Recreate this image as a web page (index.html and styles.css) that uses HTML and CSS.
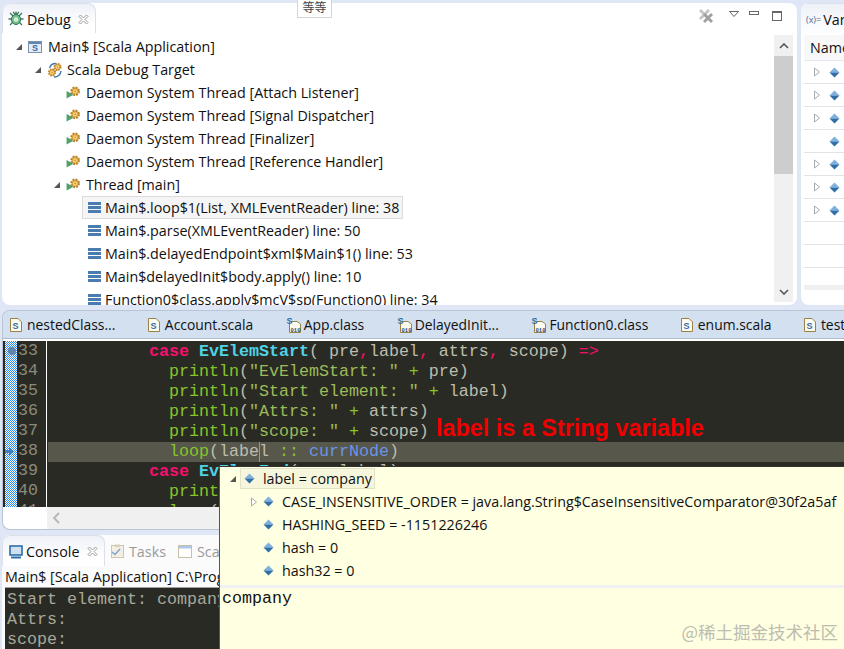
FILE: index.html
```html
<!DOCTYPE html>
<html lang="en">

<head>
    <meta charset="UTF-8">
    <title>Scala Debug</title>
    <link rel="stylesheet" href="styles.css">
</head>

<body>
    <svg class="defs" width="0" height="0">
        <defs>
            <pattern id="checker" width="2" height="2" patternUnits="userSpaceOnUse">
                <rect width="2" height="2" fill="#fff"/>
                <rect width="1" height="1" fill="#2f8cf0"/>
                <rect x="1" y="1" width="1" height="1" fill="#2f8cf0"/>
            </pattern>
        </defs>
        <symbol id="gear" viewBox="0 0 12 12">
            <circle cx="6" cy="6" r="4.2" fill="#e9b24a" stroke="#b9822a" stroke-width="2.4" stroke-dasharray="2 1.3"/>
            <circle cx="6" cy="6" r="2.2" fill="#f6d98a"/>
            <circle cx="6" cy="6" r="1" fill="#c98a2a"/>
        </symbol>
        <symbol id="thread" viewBox="0 0 16 14">
            <path d="M0.5 5.5 L8 9.5 L0.5 13.5 Z" fill="#4fa06a"/>
            <use href="#gear" x="4" y="0" width="11.5" height="11.5"/>
        </symbol>
        <symbol id="target" viewBox="0 0 16 16">
            <path d="M2.5 6 A6.5 6.5 0 0 1 9 1.5 M14 9 A6.5 6.5 0 0 1 7 15" fill="none" stroke="#3f78b0" stroke-width="1.4"/>
            <use href="#gear" x="6" y="0.5" width="9" height="9"/>
            <use href="#gear" x="0.5" y="6" width="9" height="9"/>
        </symbol>
        <symbol id="app" viewBox="0 0 14 12">
            <rect x="0.5" y="0.5" width="13" height="11" fill="#e4ecf6" stroke="#7d93ad"/>
            <rect x="1" y="1" width="12" height="2" fill="#5f86b5"/>
            <text x="7" y="10" class="icon-s">S</text>
        </symbol>
        <symbol id="frame" viewBox="0 0 13 11">
            <rect width="13" height="3" fill="#4a7cb0"/>
            <rect y="4" width="13" height="3" fill="#4a7cb0"/>
            <rect y="8" width="13" height="3" fill="#4a7cb0"/>
        </symbol>
        <symbol id="diamond" viewBox="0 0 11 11">
            <path d="M5.5 0.5 L10.5 5.5 H0.5 Z" fill="#7fb0de"/>
            <path d="M0.5 5.5 H10.5 L5.5 10.5 Z" fill="#2f6ea8"/>
        </symbol>
        <symbol id="scalafile" viewBox="0 0 12 14">
            <path d="M0.5 0.5 H8 L11.5 4 V13.5 H0.5 Z" fill="#fdfaf0" stroke="#9a8148"/>
            <text x="5.6" y="11" class="icon-s">S</text>
        </symbol>
        <symbol id="classfile" viewBox="0 0 17 16">
            <path d="M3.5 4.5 H11 L14.5 7 V15.5 H3.5 Z" fill="#fdfaf0" stroke="#9a8148"/>
            <text x="3.5" y="7" class="icon-s">S</text>
            <text x="9.5" y="14.5" class="icon-bin">010</text>
        </symbol>
        <symbol id="close" viewBox="0 0 11 11">
            <path d="M1 2.5 L2.5 1 L5.5 4 L8.5 1 L10 2.5 L7 5.5 L10 8.5 L8.5 10 L5.5 7 L2.5 10 L1 8.5 L4 5.5 Z" fill="#fff" stroke="#9a9a9a"/>
        </symbol>
        <symbol id="open" viewBox="0 0 8 8">
            <path d="M7 1 V7 H1 Z" fill="#555"/>
        </symbol>
        <symbol id="closed" viewBox="0 0 8 10">
            <path d="M1.5 1 L6.5 5 L1.5 9 Z" fill="#fff" stroke="#aaa"/>
        </symbol>
    </svg>

    <div class="top-row">
        <section class="debug-panel">
            <div class="panel-head">
                <div class="view-tab">
                    <svg class="bug" viewBox="0 0 16 16">
                        <path d="M2 2 L14 14 M14 2 L2 14 M0.5 8 H15.5 M8 0.5 V3 M5 1 L8 4 L11 1" fill="none" stroke="#3d7a5c" stroke-width="1.3"/>
                        <ellipse cx="8" cy="8.5" rx="4.6" ry="5" fill="#74c08e" stroke="#2f6f50"/>
                        <circle cx="8" cy="8.5" r="2.2" fill="#d5efdc"/>
                    </svg>
                    <span>Debug</span>
                    <svg class="tab-close"><use href="#close"/></svg>
                </div>
                <div class="head-tools">
                    <svg class="remove-all" viewBox="0 0 16 16">
                        <path d="M1 3 L3 1 L12 10 L10 12 Z M10 1 L12 3 L3 12 L1 10 Z" fill="#c4c4c4"/>
                        <path d="M5 7 L7 5 L15 13 L13 15 Z M13 5 L15 7 L7 15 L5 13 Z" fill="#a0a0a0"/>
                    </svg>
                    <svg class="tool-menu" viewBox="0 0 10 6"><path d="M0.5 0.5 H9.5 L5 5.5 Z" fill="#fff" stroke="#666"/></svg>
                    <span class="tool-min"></span>
                    <span class="tool-max"></span>
                </div>
            </div>
            <div class="debug-body">
                <ul class="tree">
                    <li class="row lv0"><svg class="twist"><use href="#open"/></svg><svg class="ic-app"><use href="#app"/></svg>Main$ [Scala Application]</li>
                    <li class="row lv1"><svg class="twist"><use href="#open"/></svg><svg class="ic-target"><use href="#target"/></svg>Scala Debug Target</li>
                    <li class="row lv2"><svg class="ic-thread"><use href="#thread"/></svg>Daemon System Thread [Attach Listener]</li>
                    <li class="row lv2"><svg class="ic-thread"><use href="#thread"/></svg>Daemon System Thread [Signal Dispatcher]</li>
                    <li class="row lv2"><svg class="ic-thread"><use href="#thread"/></svg>Daemon System Thread [Finalizer]</li>
                    <li class="row lv2"><svg class="ic-thread"><use href="#thread"/></svg>Daemon System Thread [Reference Handler]</li>
                    <li class="row lv2 has-twist"><svg class="twist"><use href="#open"/></svg><svg class="ic-thread"><use href="#thread"/></svg>Thread [main]</li>
                    <li class="row lv3"><span class="selected"><svg class="ic-frame"><use href="#frame"/></svg>Main$.loop$1(List, XMLEventReader) line: 38</span></li>
                    <li class="row lv3"><span class="plain"><svg class="ic-frame"><use href="#frame"/></svg>Main$.parse(XMLEventReader) line: 50</span></li>
                    <li class="row lv3"><span class="plain"><svg class="ic-frame"><use href="#frame"/></svg>Main$.delayedEndpoint$xml$Main$1() line: 53</span></li>
                    <li class="row lv3"><span class="plain"><svg class="ic-frame"><use href="#frame"/></svg>Main$delayedInit$body.apply() line: 10</span></li>
                    <li class="row lv3"><span class="plain"><svg class="ic-frame"><use href="#frame"/></svg>Function0$class.apply$mcV$sp(Function0) line: 34</span></li>
                </ul>
                <div class="vscroll">
                    <svg viewBox="0 0 10 6"><path d="M1 5 L5 1 L9 5" fill="none" stroke="#555" stroke-width="1.6"/></svg>
                    <div class="vthumb"></div>
                    <svg viewBox="0 0 10 6"><path d="M1 1 L5 5 L9 1" fill="none" stroke="#555" stroke-width="1.6"/></svg>
                </div>
            </div>
        </section>

        <section class="var-panel">
            <div class="var-head"><span class="var-x">(x)=</span><span>Variables</span></div>
            <div class="var-name">Name</div>
            <div class="var-row"><svg class="ic-closed"><use href="#closed"/></svg><svg class="ic-diamond"><use href="#diamond"/></svg></div>
            <div class="var-row"><svg class="ic-closed"><use href="#closed"/></svg><svg class="ic-diamond"><use href="#diamond"/></svg></div>
            <div class="var-row"><svg class="ic-closed"><use href="#closed"/></svg><svg class="ic-diamond"><use href="#diamond"/></svg></div>
            <div class="var-row no-twist"><svg class="ic-diamond"><use href="#diamond"/></svg></div>
            <div class="var-row"><svg class="ic-closed"><use href="#closed"/></svg><svg class="ic-diamond"><use href="#diamond"/></svg></div>
            <div class="var-row"><svg class="ic-closed"><use href="#closed"/></svg><svg class="ic-diamond"><use href="#diamond"/></svg></div>
            <div class="var-row"><svg class="ic-closed"><use href="#closed"/></svg><svg class="ic-diamond"><use href="#diamond"/></svg></div>
            <div class="var-row"></div>
            <div class="var-row"></div>
            <div class="var-hscroll"></div>
        </section>
    </div>

    <section class="editor-panel">
        <div class="editor-tabs">
            <span class="file-tab"><svg class="ic-scala"><use href="#scalafile"/></svg>nestedClass...</span>
            <span class="file-tab"><svg class="ic-scala"><use href="#scalafile"/></svg>Account.scala</span>
            <span class="file-tab"><svg class="ic-class"><use href="#classfile"/></svg>App.class</span>
            <span class="file-tab"><svg class="ic-class"><use href="#classfile"/></svg>DelayedInit...</span>
            <span class="file-tab"><svg class="ic-class"><use href="#classfile"/></svg>Function0.class</span>
            <span class="file-tab"><svg class="ic-scala"><use href="#scalafile"/></svg>enum.scala</span>
            <span class="file-tab"><svg class="ic-scala"><use href="#scalafile"/></svg>test.scala</span>
        </div>
        <div class="code-area">
            <div class="marks">
                <svg class="checker" width="12" height="170"><rect width="12" height="170" fill="url(#checker)"/></svg>
                <span class="bp-dot"></span>
                <svg class="ip-arrow" viewBox="0 0 9 9"><path d="M0 3 H4 V0 L9 4.5 L4 9 V6 H0 Z" fill="#3f7fc0"/></svg>
            </div>
            <div class="nums">33
34
35
36
37
38
39
40
41</div>
            <pre class="code"><span class="ln">          <b class="kw">case</b> <b class="ty">EvElemStart</b>( pre<span class="kw">,</span>label<span class="kw">,</span> attrs<span class="kw">,</span> scope) <span class="kw">=&gt;</span></span>
<span class="ln">            <span class="fn">println</span>(<span class="str">"EvElemStart: "</span> <span class="fn">+</span> pre)</span>
<span class="ln">            <span class="fn">println</span>(<span class="str">"Start element: "</span> <span class="fn">+</span> label)</span>
<span class="ln">            <span class="fn">println</span>(<span class="str">"Attrs: "</span> <span class="fn">+</span> attrs)</span>
<span class="ln">            <span class="fn">println</span>(<span class="str">"scope: "</span> <span class="fn">+</span> scope)</span>
<span class="ln current">            <span class="fn">loop</span>(labe<span class="caret"></span>l <span class="fn">::</span> <span class="blue">currNode</span>)</span>
<span class="ln">          <b class="kw">case</b> <b class="ty">EvElemEnd</b>(pre,label) <span class="kw">=&gt;</span></span>
<span class="ln">            <span class="fn">println</span>(<span class="str">"EvElemEnd: "</span>)</span>
<span class="ln">            <span class="fn">loop</span>(currNode)</span></pre>
        </div>
        <div class="editor-hscroll">
            <svg viewBox="0 0 7 12"><path d="M6 1 L1 6 L6 11" fill="none" stroke="#b5b5b5" stroke-width="1.8"/></svg>
        </div>
    </section>

    <section class="console-panel">
        <div class="console-tabs">
            <div class="view-tab console-tab">
                <svg class="monitor" viewBox="0 0 14 14">
                    <rect x="1" y="1" width="12" height="9" fill="#cfe0f2" stroke="#2f6ea8" stroke-width="1.6"/>
                    <rect x="2" y="11.5" width="10" height="2" fill="#2f6ea8"/>
                </svg>
                <span>Console</span>
                <svg class="tab-close"><use href="#close"/></svg>
            </div>
            <span class="dim-tab">
                <svg class="ic-tasks" viewBox="0 0 13 14"><rect x="0.5" y="1.5" width="12" height="12" fill="#f4efe2" stroke="#cfc6ae"/><rect x="4" y="0.5" width="5" height="2.5" fill="#d8d0ba"/><path d="M1 8 L4 10.5 L9 5" fill="none" stroke="#7fa6d8" stroke-width="1.6"/></svg>Tasks
            </span>
            <span class="dim-tab">
                <svg class="ic-scale" viewBox="0 0 14 13"><rect x="0.5" y="0.5" width="13" height="12" fill="#fff" stroke="#c8bfa6"/><rect x="1" y="1" width="12" height="2.5" fill="#a9c8ea"/></svg>Scala
            </span>
        </div>
        <div class="console-title">Main$ [Scala Application] C:\Program Files\Java\bin\javaw.exe</div>
        <pre class="console-out">Start element: company
Attrs:
scope:</pre>
    </section>

    <!-- hover popup over editor and console -->
    <div class="hover-pop">
        <ul class="pop-tree">
            <li class="pop-row pop-root"><svg class="twist"><use href="#open"/></svg><span class="pop-sel"><svg class="ic-diamond"><use href="#diamond"/></svg>label = company</span></li>
            <li class="pop-row"><svg class="ic-closed"><use href="#closed"/></svg><svg class="ic-diamond"><use href="#diamond"/></svg>CASE_INSENSITIVE_ORDER = java.lang.String$CaseInsensitiveComparator@30f2a5af</li>
            <li class="pop-row no-twist"><svg class="ic-diamond"><use href="#diamond"/></svg>HASHING_SEED = -1151226246</li>
            <li class="pop-row no-twist"><svg class="ic-diamond"><use href="#diamond"/></svg>hash = 0</li>
            <li class="pop-row no-twist"><svg class="ic-diamond"><use href="#diamond"/></svg>hash32 = 0</li>
        </ul>
        <pre class="pop-detail">company</pre>
    </div>

    <div class="note">label is a String variable</div>
    <div class="tip">等等</div>
    <div class="watermark">@稀土掘金技术社区</div>
</body>

</html>
```

FILE: styles.css
```css
* {
    box-sizing: border-box;
}

html,
body {
    margin: 0;
    height: 649px;
    overflow: hidden;
}

body {
    position: relative;
    display: flex;
    flex-direction: column;
    gap: 5px;
    padding: 3px 0 0 2px;
    background: #dfe6f5;
    font-family: "Open Sans", "Noto Sans CJK SC", sans-serif;
    font-size: 14.3px;
    color: #111;
}

svg {
    flex: none;
}

.defs {
    position: absolute;
}

.icon-s {
    font: bold 9px "Liberation Sans", sans-serif;
    fill: #2f6ea8;
    text-anchor: middle;
}

.icon-bin {
    font: bold 5.5px "Liberation Mono", monospace;
    fill: #2a4a70;
    text-anchor: middle;
}

/* top row */
.top-row {
    display: flex;
    gap: 4px;
    height: 302px;
    flex: none;
}

.debug-panel {
    width: 795px;
    display: flex;
    flex-direction: column;
    background: #fff;
    border-radius: 8px;
    overflow: hidden;
}

.panel-head {
    display: flex;
    justify-content: space-between;
    height: 32px;
    flex: none;
}

.view-tab {
    display: flex;
    align-items: center;
    width: 94px;
    height: 30px;
    padding: 1px 0 0 5px;
    border: 1px solid #dbe0ea;
    border-bottom: 0;
    border-radius: 8px 8px 0 0;
    background: linear-gradient(#eef1f8, #fff 70%);
}

.view-tab span {
    margin-left: 3px;
}

.bug {
    width: 16px;
    height: 16px;
}

.tab-close {
    width: 11px;
    height: 11px;
    margin-left: 7px;
}

.head-tools {
    display: flex;
    align-items: flex-start;
    padding: 5px 15px 0 0;
}

.remove-all {
    width: 16px;
    height: 16px;
    margin-right: 15px;
}

.tool-menu {
    width: 10px;
    height: 6px;
    margin: 3px 10px 0 0;
}

.tool-min {
    width: 10px;
    height: 4px;
    margin: 3px 13px 0 0;
    border: 1px solid #666;
}

.tool-max {
    width: 10px;
    height: 10px;
    margin-top: 3px;
    border: 1px solid #666;
    border-top-width: 2px;
}

.debug-body {
    flex: 1;
    display: flex;
    min-height: 0;
    padding-right: 4px;
}

.tree {
    flex: 1;
    list-style: none;
    margin: 0;
    padding: 0;
    overflow: hidden;
}

.row {
    display: flex;
    align-items: center;
    height: 23px;
    white-space: nowrap;
}

.lv0 {
    padding-left: 13px;
}

.lv1 {
    padding-left: 32px;
}

.lv2 {
    padding-left: 64px;
}

.lv2.has-twist {
    padding-left: 51px;
}

.lv3 {
    padding-left: 80px;
}

.twist {
    width: 8px;
    height: 8px;
    margin-right: 5px;
}

.ic-app {
    width: 14px;
    height: 12px;
    margin-right: 6px;
}

.ic-target {
    width: 16px;
    height: 16px;
    margin-right: 4px;
}

.ic-thread {
    width: 15px;
    height: 13px;
    margin-right: 5px;
}

.selected,
.plain {
    display: flex;
    align-items: center;
    height: 23px;
    padding: 0 3px;
    border: 1px solid transparent;
}

.selected {
    background: #f5f5f5;
    border-color: #dcdcdc;
}

.ic-frame {
    width: 13px;
    height: 11px;
    margin: 0 4px 0 2px;
}

.vscroll {
    width: 19px;
    flex: none;
    display: flex;
    flex-direction: column;
    align-items: center;
    margin-bottom: 3px;
    background: #f0f0f0;
}

.vscroll svg {
    width: 10px;
    height: 6px;
    margin: 8px 0 7px;
}

.vthumb {
    width: 100%;
    height: 118px;
    background: #cdcdcd;
}

.vthumb + svg {
    margin-top: auto;
}

.var-panel {
    flex: 1;
    background: #fff;
    border-radius: 8px 0 0 8px;
    overflow: hidden;
    white-space: nowrap;
}

.var-head {
    display: flex;
    align-items: center;
    gap: 2px;
    height: 32px;
    padding: 0 0 1px 5px;
    border-top: 1px solid #dbe0ea;
    background: linear-gradient(#eef1f7, #fff);
}

.var-x {
    font-size: 9px;
    color: #4a6a9a;
}

.var-name {
    height: 26px;
    margin-left: 3px;
    padding: 3px 0 0 6px;
    background: #f8f8f8;
    border-bottom: 1px solid #e3e9f1;
}

.var-row {
    display: flex;
    align-items: center;
    height: 23px;
    margin-left: 3px;
    padding-left: 9px;
    border-bottom: 1px solid #e4e4e4;
}

.no-twist {
    padding-left: 25px;
}

.ic-closed {
    width: 8px;
    height: 10px;
    margin-right: 8px;
}

.ic-diamond {
    width: 11px;
    height: 11px;
}

.var-hscroll {
    height: 5px;
    margin: 17px 0 0 3px;
    background: #f0f0f0;
}

/* editor */
.editor-panel {
    flex: none;
    height: 220px;
    display: flex;
    flex-direction: column;
    background: #fff;
    border: 1px solid #b9c4d4;
    border-right: 0;
    border-radius: 8px 0 0 8px;
    overflow: hidden;
}

.editor-tabs {
    flex: none;
    display: flex;
    align-items: center;
    gap: 32.5px;
    height: 28px;
    padding-left: 7px;
    background: #d2e0f0;
    border-bottom: 1px solid #aebccd;
    font-size: 13.9px;
    white-space: nowrap;
}

.file-tab {
    display: flex;
    align-items: center;
}

.ic-scala {
    width: 12px;
    height: 14px;
    margin-right: 5px;
}

.ic-class {
    width: 17px;
    height: 16px;
    margin-right: 1px;
}

.code-area {
    flex: 1;
    min-height: 0;
    display: flex;
    margin-top: 2px;
    overflow: hidden;
    background: #2a2a24;
    font: 16.67px/20px "Liberation Mono", monospace;
    color: #bdbdae;
}

.marks {
    position: relative;
    width: 12px;
    margin-left: 2px;
    flex: none;
    background: #fff;
}

.checker {
    display: block;
}

.bp-dot {
    position: absolute;
    top: 6px;
    left: 3px;
    width: 8px;
    height: 8px;
    border-radius: 50%;
    background: #5f87ad;
}

.ip-arrow {
    position: absolute;
    top: 106px;
    left: 0;
    width: 9px;
    height: 9px;
}

.nums {
    width: 30px;
    padding-left: 1px;
    flex: none;
    white-space: pre;
    color: #8a8a7c;
    border-right: 1px solid #fff;
}

.code {
    flex: 1;
    margin: 0 0 0 1px;
    padding: 1px 0 0 0;
    font: inherit;
}

.ln {
    display: inline-block;
    width: 100%;
    height: 20px;
    text-indent: 1px;
    margin-bottom: -20px;
    vertical-align: top;
}

.current {
    background: #57574b;
}

.kw {
    color: #f5106f;
}

.ty {
    color: #4fd3e6;
}

.fn {
    color: #86c52a;
}

.str {
    color: #9dbb58;
}

.blue {
    color: #6a94e6;
}

.caret {
    display: inline-block;
    width: 1px;
    height: 20px;
    margin-right: -1px;
    background: #9092b0;
    vertical-align: top;
}

.editor-hscroll {
    flex: none;
    height: 22px;
    margin-left: 44px;
    padding: 5px 0 0 6px;
    background: #f0f0f0;
}

.editor-hscroll svg {
    width: 7px;
    height: 12px;
    display: block;
}

/* console */
.console-panel {
    flex: 1;
    min-height: 0;
    display: flex;
    flex-direction: column;
    background: #fbfbfb;
    border-radius: 8px 0 0 0;
    overflow: hidden;
}

.console-tabs {
    flex: none;
    display: flex;
    align-items: center;
    height: 31px;
    white-space: nowrap;
}

.console-tab {
    width: 103px;
    height: 31px;
    padding: 1px 0 0 6px;
}

.monitor {
    width: 14px;
    height: 14px;
}

.console-tab .tab-close {
    margin-left: 8px;
}

.dim-tab {
    display: flex;
    align-items: center;
    margin: 1px 0 0 6px;
    color: #9a9a9a;
}

.dim-tab + .dim-tab {
    margin-left: 12px;
}

.ic-tasks {
    width: 13px;
    height: 14px;
    margin-right: 5px;
}

.ic-scale {
    width: 14px;
    height: 13px;
    margin-right: 5px;
}

.console-title {
    flex: none;
    height: 22px;
    margin-left: 3px;
    padding-top: 2px;
    line-height: 18px;
    border-bottom: 1px solid #a0a0a0;
    white-space: nowrap;
}

.console-out {
    flex: 1;
    margin: 0 0 0 3px;
    padding: 2px 0 0 2px;
    background: #2a2a24;
    font: 16.67px/20px "Liberation Mono", monospace;
    color: #a8a898;
}

/* popup */
.hover-pop {
    position: absolute;
    left: 219px;
    top: 466px;
    right: 0;
    bottom: 0;
    display: flex;
    flex-direction: column;
    background: #ffffe1;
    border-left: 1px solid #555;
    border-top: 1px solid #333;
}

.pop-tree {
    height: 121px;
    flex: none;
    margin: 0;
    padding: 0 0 0 9px;
    list-style: none;
    border-bottom: 3px solid #f0f0f0;
}

.pop-row {
    display: flex;
    align-items: center;
    height: 23px;
    padding-left: 21px;
    white-space: nowrap;
}

.pop-row .ic-closed {
    margin-right: 5px;
}

.pop-row .ic-diamond {
    margin-right: 8px;
}

.pop-row.no-twist {
    padding-left: 34px;
}

.pop-root {
    padding-left: 0;
}

.pop-root .twist {
    margin-right: 3px;
}

.pop-sel {
    display: flex;
    align-items: center;
    height: 21px;
    padding: 0 2px 0 3px;
    border: 1px solid #e2e2c8;
    background: #f6f6dc;
}

.pop-detail {
    margin: 0;
    padding: 1px 0 0 2px;
    font: 16.67px/20px "Liberation Mono", monospace;
    color: #111;
}

/* overlays */
.note {
    position: absolute;
    left: 436px;
    top: 414px;
    font: bold 23.4px/28px "Liberation Sans", sans-serif;
    color: #f00000;
    white-space: nowrap;
}

.tip {
    position: absolute;
    left: 297px;
    top: -3px;
    width: 35px;
    height: 21px;
    border: 1px solid #d5d5d5;
    background: #fff;
    font: 12px/18px "Noto Sans CJK SC", sans-serif;
    text-align: center;
    color: #444;
}

.watermark {
    position: absolute;
    right: 6px;
    top: 621px;
    font: 17.5px/22px "Noto Sans CJK SC", sans-serif;
    color: #bdbdb0;
    white-space: nowrap;
}
```
